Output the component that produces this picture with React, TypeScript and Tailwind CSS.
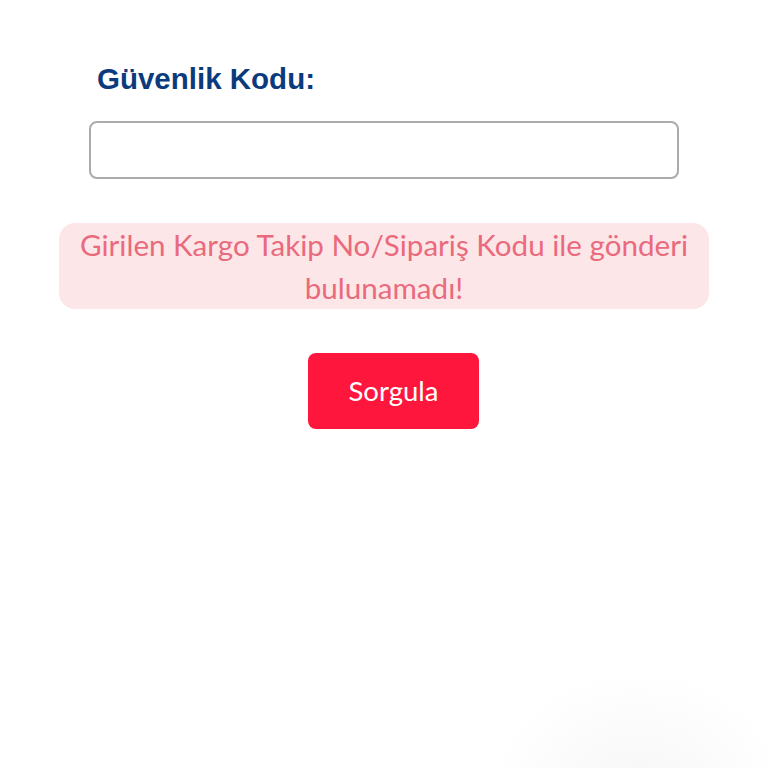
export default function App() {
  return (
    <div className="relative w-[768px] h-[768px] overflow-hidden bg-white">
      <div className="flex flex-col pt-[60px]">
        {/* güvenlik kodu */}
        <div className="pl-[97px]">
          <label className="block text-[29.5px] leading-[38px] font-bold text-[#0b3b7c] [font-family:'Liberation_Sans',Arial,sans-serif]">
            Güvenlik Kodu:
          </label>
        </div>
        <div className="mt-[23px] px-[89px]">
          <input
            type="text"
            className="block w-full h-[58px] rounded-[8px] border-2 border-[#ababab] bg-white outline-none"
          />
        </div>

        {/* hata mesajı */}
        <div className="mt-[44px] mx-[59px] rounded-[16px] bg-[#fde6e8] px-2">
          <p className="text-center text-[29.6px] leading-[43px] text-[#ea6a7d] [font-family:Lato,'Open_Sans',sans-serif]">
            Girilen Kargo Takip No/Sipariş Kodu ile gönderi bulunamadı!
          </p>
        </div>

        <div className="mt-[44px] flex justify-center pl-[19px]">
          <button className="w-[171px] h-[76px] rounded-[8px] bg-[#ff163d] text-white text-[27.5px] [font-family:Lato,'Open_Sans',sans-serif]">
            Sorgula
          </button>
        </div>
      </div>

      {/* alt köşe gölgesi */}
      <div className="absolute right-[-20px] bottom-[-160px] w-[300px] h-[260px] rounded-full bg-[radial-gradient(closest-side,rgba(0,0,0,0.035),rgba(0,0,0,0))]" />
    </div>
  );
}
